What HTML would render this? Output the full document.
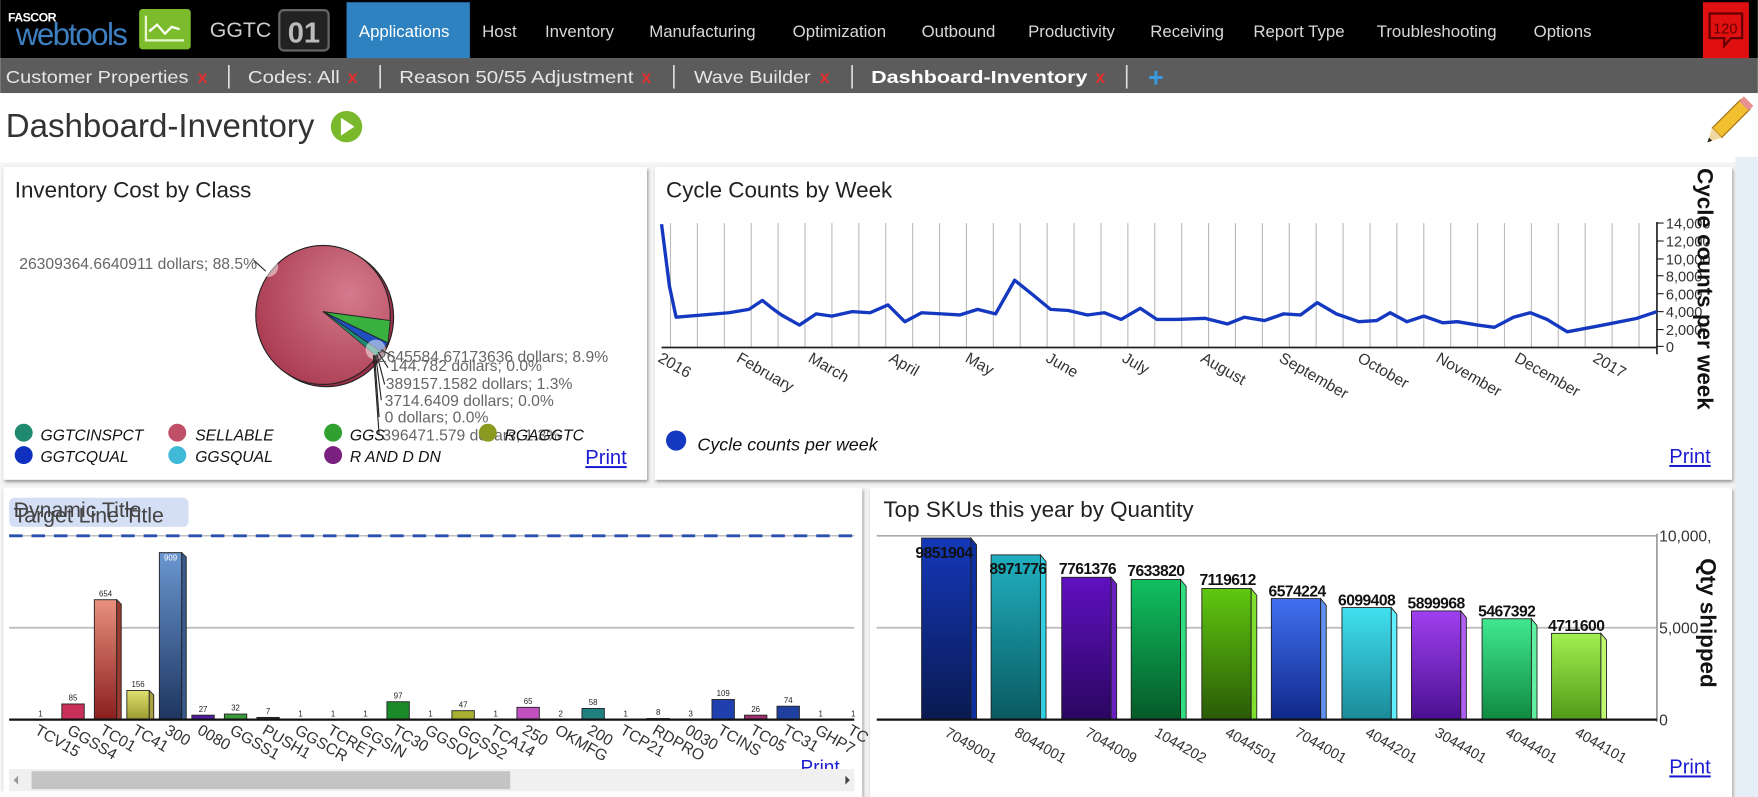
<!DOCTYPE html>
<html><head><meta charset="utf-8"><style>
html,body{margin:0;padding:0;width:1758px;height:797px;overflow:hidden;background:#fff}
svg{display:block}
text{font-family:"Liberation Sans",Arial,sans-serif}
</style></head><body>
<svg width="1758" height="797" viewBox="0 0 1568 711" xmlns="http://www.w3.org/2000/svg">
<defs>
<radialGradient id="pie" cx="0.7" cy="0.35" r="0.8"><stop offset="0" stop-color="#d47a8c"/><stop offset="1" stop-color="#a8384e"/></radialGradient>
<linearGradient id="gsal" x1="0" y1="0" x2="0" y2="1"><stop offset="0" stop-color="#e8907e"/><stop offset="1" stop-color="#8a1e1e"/></linearGradient>
<linearGradient id="gblu" x1="0" y1="0" x2="0" y2="1"><stop offset="0" stop-color="#6a96d0"/><stop offset="1" stop-color="#1e3660"/></linearGradient>
<linearGradient id="gyel" x1="0" y1="0" x2="0" y2="1"><stop offset="0" stop-color="#e0e070"/><stop offset="1" stop-color="#9a9a30"/></linearGradient>
<linearGradient id="b0" x1="0" y1="0" x2="0" y2="1"><stop offset="0" stop-color="#1438b8"/><stop offset="1" stop-color="#0a1a50"/></linearGradient>
<linearGradient id="b1" x1="0" y1="0" x2="0" y2="1"><stop offset="0" stop-color="#20b0c0"/><stop offset="1" stop-color="#0a5a60"/></linearGradient>
<linearGradient id="b2" x1="0" y1="0" x2="0" y2="1"><stop offset="0" stop-color="#6010c0"/><stop offset="1" stop-color="#2a0660"/></linearGradient>
<linearGradient id="b3" x1="0" y1="0" x2="0" y2="1"><stop offset="0" stop-color="#10c060"/><stop offset="1" stop-color="#065a28"/></linearGradient>
<linearGradient id="b4" x1="0" y1="0" x2="0" y2="1"><stop offset="0" stop-color="#60c810"/><stop offset="1" stop-color="#2a5a06"/></linearGradient>
<linearGradient id="b5" x1="0" y1="0" x2="0" y2="1"><stop offset="0" stop-color="#4070f0"/><stop offset="1" stop-color="#10288a"/></linearGradient>
<linearGradient id="b6" x1="0" y1="0" x2="0" y2="1"><stop offset="0" stop-color="#40e0f0"/><stop offset="1" stop-color="#1a8a98"/></linearGradient>
<linearGradient id="b7" x1="0" y1="0" x2="0" y2="1"><stop offset="0" stop-color="#a040f0"/><stop offset="1" stop-color="#4a1090"/></linearGradient>
<linearGradient id="b8" x1="0" y1="0" x2="0" y2="1"><stop offset="0" stop-color="#40e890"/><stop offset="1" stop-color="#108a40"/></linearGradient>
<linearGradient id="b9" x1="0" y1="0" x2="0" y2="1"><stop offset="0" stop-color="#a0f050"/><stop offset="1" stop-color="#509a18"/></linearGradient>
<filter id="sh" x="-5%" y="-5%" width="110%" height="110%"><feDropShadow dx="1" dy="2" stdDeviation="1.5" flood-color="#555" flood-opacity="0.6"/></filter>
</defs>

<rect x="0" y="83" width="1568" height="628" fill="#f4f4f4"/>
<rect x="0" y="83" width="1568" height="62" fill="#fff"/>
<rect x="1548" y="140" width="20" height="571" fill="#e6eef8"/>

<rect x="0" y="0" width="1568" height="52" fill="#000"/>
<text x="7" y="19" font-size="11" font-weight="bold" fill="#fff" letter-spacing="-0.5">FASCOR</text>
<text x="14" y="40" font-size="28" fill="#3d7fc0" letter-spacing="-1.5">webtools</text>
<rect x="124" y="8" width="46" height="36" rx="3" fill="#7cbc2c"/>
<path d="M130 14 L130 36 L164 36" stroke="#e8f6d0" stroke-width="2" fill="none"/>
<path d="M133 28 L140 22 L147 30 L153 24 L160 26" stroke="#fff" stroke-width="2" fill="none"/>
<text x="187" y="33" font-size="19" fill="#ccc">GGTC</text>
<rect x="249" y="9" width="44" height="36" rx="4" fill="#222" stroke="#666" stroke-width="2"/>
<text x="271" y="38" font-size="26" font-weight="bold" fill="#bbb" text-anchor="middle">01</text>
<rect x="309" y="2" width="110" height="50" fill="#2e82c0"/>
<g font-size="15" fill="#d8d8d8">
<text x="320" y="33" fill="#fff">Applications</text>
<text x="430" y="33">Host</text>
<text x="486" y="33">Inventory</text>
<text x="579" y="33">Manufacturing</text>
<text x="707" y="33">Optimization</text>
<text x="822" y="33">Outbound</text>
<text x="917" y="33">Productivity</text>
<text x="1026" y="33">Receiving</text>
<text x="1118" y="33">Report Type</text>
<text x="1228" y="33">Troubleshooting</text>
<text x="1368" y="33">Options</text>
</g>
<rect x="1519" y="2" width="41" height="50" fill="#e01010"/>
<path d="M1525 12 h29 v22 h-10 l-6 7 v-7 h-13 z" fill="none" stroke="#600" stroke-width="2"/>
<text x="1539" y="30" font-size="13" fill="#600" text-anchor="middle">120</text>

<rect x="0" y="52" width="1568" height="31" fill="#5c5c5c"/>
<g font-size="16" fill="#e6e6e6">
<text x="5" y="74" textLength="163" lengthAdjust="spacingAndGlyphs">Customer Properties</text><text x="176" y="74" fill="#e03030" font-weight="bold">x</text>
<text x="221" y="74" textLength="82" lengthAdjust="spacingAndGlyphs">Codes: All</text><text x="310" y="74" fill="#e03030" font-weight="bold">x</text>
<text x="356" y="74" textLength="209" lengthAdjust="spacingAndGlyphs">Reason 50/55 Adjustment</text><text x="572" y="74" fill="#e03030" font-weight="bold">x</text>
<text x="619" y="74" textLength="104" lengthAdjust="spacingAndGlyphs">Wave Builder</text><text x="731" y="74" fill="#e03030" font-weight="bold">x</text>
<text x="777" y="74" font-weight="bold" fill="#fff" textLength="193" lengthAdjust="spacingAndGlyphs">Dashboard-Inventory</text><text x="977" y="74" fill="#e03030" font-weight="bold">x</text>
</g>
<g stroke="#ddd" stroke-width="1.5"><line x1="204" y1="58" x2="204" y2="79"/><line x1="339" y1="58" x2="339" y2="79"/><line x1="601" y1="58" x2="601" y2="79"/><line x1="760" y1="58" x2="760" y2="79"/><line x1="1005" y1="58" x2="1005" y2="79"/></g>
<text x="1024" y="77" font-size="24" font-weight="bold" fill="#3a9ae0">+</text>

<text x="5" y="122" font-size="29.5" fill="#333">Dashboard-Inventory</text>
<circle cx="309" cy="113" r="14" fill="#7ab82c"/>
<path d="M304 105 L316 113 L304 121 Z" fill="#fff"/>
<g transform="rotate(45 1540 110)">
<rect x="1534" y="86" width="12" height="36" fill="#f0c030" stroke="#a07010" stroke-width="1"/>
<rect x="1534" y="82" width="12" height="6" fill="#e89090"/>
<path d="M1534 122 L1540 134 L1546 122 Z" fill="#f0d8a0"/>
<path d="M1538 130 L1540 134 L1542 130 Z" fill="#222"/>
</g>

<rect x="3" y="149" width="574" height="279" fill="#fff" filter="url(#sh)"/>
<rect x="584" y="149" width="961" height="279" fill="#fff" filter="url(#sh)"/>
<rect x="3" y="435" width="766" height="276" fill="#fff" filter="url(#sh)"/>
<rect x="776" y="435" width="769" height="276" fill="#fff" filter="url(#sh)"/>

<text x="13" y="176" font-size="20" fill="#222">Inventory Cost by Class</text>
<ellipse cx="291" cy="283" rx="60" ry="62" fill="#9a3048" stroke="#222"/>
<ellipse cx="288" cy="281" rx="60" ry="62" fill="url(#pie)" stroke="#222"/>
<path d="M288 278 L348 286 L346 306 Z" fill="#3ab040" stroke="#222" stroke-width="0.8"/>
<path d="M288 278 L346 306 L340 314 Z" fill="#2050c0" stroke="#222" stroke-width="0.8"/>
<path d="M288 278 L340 314 L336 318 Z" fill="#208a70" stroke="#222" stroke-width="0.6"/>
<circle cx="239" cy="238" r="9" fill="#fff" opacity="0.5"/>
<circle cx="335" cy="312" r="9" fill="#fff" opacity="0.5"/>
<g stroke="#222" stroke-width="1" fill="none">
<path d="M226 232 L237 242"/><path d="M340 312 L352 319"/><path d="M337 314 L346 328"/><path d="M336 316 L343 343"/><path d="M335 317 L340 357"/><path d="M334 317 L338 372"/><path d="M333 317 L338 387"/>
</g>
<g font-size="14" fill="#666">
<text x="17" y="240">26309364.6640911 dollars; 88.5%</text>
<text x="337" y="323">2645584.67173636 dollars; 8.9%</text>
<text x="348" y="331">144.782 dollars; 0.0%</text>
<text x="344" y="347">389157.1582 dollars; 1.3%</text>
<text x="343" y="362">3714.6409 dollars; 0.0%</text>
<text x="343" y="377">0 dollars; 0.0%</text>
<text x="341" y="393">396471.579 dollars; 1.3%</text>
</g>
<g font-size="14" font-style="italic" fill="#111">
<circle cx="21" cy="386" r="8" fill="#208a70"/><text x="36" y="393">GGTCINSPCT</text>
<circle cx="21" cy="406" r="8" fill="#1030c0"/><text x="36" y="412">GGTCQUAL</text>
<circle cx="158" cy="386" r="8" fill="#c05068"/><text x="174" y="393">SELLABLE</text>
<circle cx="158" cy="406" r="8" fill="#40b8d8"/><text x="174" y="412">GGSQUAL</text>
<circle cx="297" cy="386" r="8" fill="#30a030"/><text x="312" y="393">GGS</text>
<circle cx="297" cy="406" r="8" fill="#7a2080"/><text x="312" y="412">R AND D DN</text>
<circle cx="435" cy="386" r="8" fill="#8a9a20"/><text x="450" y="393">RGAGGTC</text>
</g>
<text x="522" y="414" font-size="18" fill="#1a1ad0" text-decoration="underline">Print</text>

<text x="594" y="176" font-size="20" fill="#222">Cycle Counts by Week</text>
<g stroke="#bbb" stroke-width="1">
<line x1="598" y1="199" x2="598" y2="310"/><line x1="622" y1="199" x2="622" y2="310"/><line x1="646" y1="199" x2="646" y2="310"/><line x1="670" y1="199" x2="670" y2="310"/><line x1="694" y1="199" x2="694" y2="310"/><line x1="718" y1="199" x2="718" y2="310"/><line x1="742" y1="199" x2="742" y2="310"/><line x1="766" y1="199" x2="766" y2="310"/><line x1="790" y1="199" x2="790" y2="310"/><line x1="814" y1="199" x2="814" y2="310"/><line x1="838" y1="199" x2="838" y2="310"/><line x1="862" y1="199" x2="862" y2="310"/><line x1="886" y1="199" x2="886" y2="310"/><line x1="910" y1="199" x2="910" y2="310"/><line x1="934" y1="199" x2="934" y2="310"/><line x1="958" y1="199" x2="958" y2="310"/><line x1="982" y1="199" x2="982" y2="310"/><line x1="1006" y1="199" x2="1006" y2="310"/><line x1="1030" y1="199" x2="1030" y2="310"/><line x1="1054" y1="199" x2="1054" y2="310"/><line x1="1078" y1="199" x2="1078" y2="310"/><line x1="1102" y1="199" x2="1102" y2="310"/><line x1="1126" y1="199" x2="1126" y2="310"/><line x1="1150" y1="199" x2="1150" y2="310"/><line x1="1174" y1="199" x2="1174" y2="310"/><line x1="1198" y1="199" x2="1198" y2="310"/><line x1="1222" y1="199" x2="1222" y2="310"/><line x1="1246" y1="199" x2="1246" y2="310"/><line x1="1270" y1="199" x2="1270" y2="310"/><line x1="1294" y1="199" x2="1294" y2="310"/><line x1="1318" y1="199" x2="1318" y2="310"/><line x1="1342" y1="199" x2="1342" y2="310"/><line x1="1366" y1="199" x2="1366" y2="310"/><line x1="1390" y1="199" x2="1390" y2="310"/><line x1="1414" y1="199" x2="1414" y2="310"/><line x1="1438" y1="199" x2="1438" y2="310"/><line x1="1462" y1="199" x2="1462" y2="310"/>
</g>
<line x1="590" y1="310" x2="1478" y2="310" stroke="#222" stroke-width="1.5"/>
<line x1="1478" y1="198" x2="1478" y2="316" stroke="#222" stroke-width="1.5"/>
<g stroke="#222"><line x1="1478" y1="199" x2="1484" y2="199"/><line x1="1478" y1="215" x2="1484" y2="215"/><line x1="1478" y1="231" x2="1484" y2="231"/><line x1="1478" y1="246" x2="1484" y2="246"/><line x1="1478" y1="262" x2="1484" y2="262"/><line x1="1478" y1="278" x2="1484" y2="278"/><line x1="1478" y1="294" x2="1484" y2="294"/><line x1="1478" y1="309" x2="1484" y2="309"/></g>
<g font-size="13" fill="#333"><text x="1486" y="204">14,000</text><text x="1486" y="220">12,000</text><text x="1486" y="236">10,000</text><text x="1486" y="251">8,000</text><text x="1486" y="267">6,000</text><text x="1486" y="283">4,000</text><text x="1486" y="299">2,000</text><text x="1486" y="314">0</text></g>
<text transform="translate(1514 150) rotate(90)" font-size="20" font-weight="bold" fill="#111">Cycle counts per week</text>
<polyline fill="none" stroke="#1438c0" stroke-width="3" stroke-linejoin="round" points="590,200 597,255 603,283 650,279 668,276 680,268 690,276 697,281 713,290 728,280 742,282 760,278 776,279 792,272 807,287 822,279 840,280 856,281 872,276 888,280 905,250 920,262 937,276 953,277 970,281 985,279 1000,285 1017,275 1032,285 1050,285 1075,284 1095,289 1110,283 1128,286 1145,280 1160,281 1175,270 1192,280 1212,287 1228,286 1240,279 1255,287 1270,282 1287,288 1300,287 1318,290 1333,292 1350,283 1365,279 1380,285 1398,296 1430,290 1460,284 1478,278"/>
<g font-size="14" fill="#333">
<text transform="translate(586 322) rotate(30)">2016</text>
<text transform="translate(656 322) rotate(30)">February</text>
<text transform="translate(720 322) rotate(30)">March</text>
<text transform="translate(792 322) rotate(30)">April</text>
<text transform="translate(860 322) rotate(30)">May</text>
<text transform="translate(932 322) rotate(30)">June</text>
<text transform="translate(1000 322) rotate(30)">July</text>
<text transform="translate(1070 322) rotate(30)">August</text>
<text transform="translate(1140 322) rotate(30)">September</text>
<text transform="translate(1210 322) rotate(30)">October</text>
<text transform="translate(1280 322) rotate(30)">November</text>
<text transform="translate(1350 322) rotate(30)">December</text>
<text transform="translate(1420 322) rotate(30)">2017</text>
</g>
<circle cx="603" cy="393" r="9" fill="#1438c0"/>
<text x="622" y="402" font-size="16" font-style="italic" fill="#111">Cycle counts per week</text>
<text x="1489" y="413" font-size="18" fill="#1a1ad0" text-decoration="underline">Print</text>

<rect x="8" y="444" width="160" height="26" rx="5" fill="#d4def4"/>
<text x="12" y="461" font-size="19" fill="#444">Dynamic Title</text>
<text x="12" y="466" font-size="19" fill="#444">Target Line Title</text>
<line x1="8" y1="478" x2="762" y2="478" stroke="#aaa" stroke-width="1"/>
<line x1="8" y1="478" x2="762" y2="478" stroke="#2a50b0" stroke-width="2.5" stroke-dasharray="12,8"/>
<line x1="8" y1="560" x2="762" y2="560" stroke="#bbb" stroke-width="1.5"/>
<g stroke="#222" stroke-width="0.8">
<rect x="55" y="628" width="20" height="14" fill="#c8305a"/>
<rect x="84" y="535" width="20" height="107" fill="url(#gsal)"/><path d="M104 535 l4 4 v103 h-4z" fill="#9a3a30"/>
<rect x="113" y="616" width="20" height="26" fill="url(#gyel)"/><path d="M133 616 l4 4 v22 h-4z" fill="#aaa040"/>
<rect x="142" y="493" width="20" height="149" fill="url(#gblu)"/><path d="M162 493 l4 4 v145 h-4z" fill="#3a5a90"/>
<rect x="171" y="638" width="20" height="4" fill="#5020a0"/>
<rect x="200" y="637" width="20" height="5" fill="#3a9a3a"/>
<rect x="229" y="640" width="20" height="2" fill="#333"/>
<rect x="345" y="626" width="20" height="16" fill="#1a8a2a"/>
<rect x="403" y="634" width="20" height="8" fill="#a8b030"/>
<rect x="461" y="631" width="20" height="11" fill="#c050c0"/>
<rect x="519" y="632" width="20" height="10" fill="#208080"/>
<rect x="577" y="641" width="20" height="1" fill="#333"/>
<rect x="635" y="624" width="20" height="18" fill="#2040b0"/>
<rect x="664" y="638" width="20" height="4" fill="#a03070"/>
<rect x="693" y="630" width="20" height="12" fill="#2040a0"/>
</g>
<line x1="8" y1="642" x2="762" y2="642" stroke="#111" stroke-width="2"/>
<g font-size="7" fill="#222" text-anchor="middle">
<text x="36" y="639">1</text><text x="65" y="625">85</text><text x="94" y="532">654</text><text x="123" y="613">156</text><text x="152" y="500" fill="#fff">909</text><text x="181" y="635">27</text><text x="210" y="634">32</text><text x="239" y="637">7</text><text x="268" y="639">1</text><text x="297" y="639">1</text><text x="326" y="639">1</text><text x="355" y="623">97</text><text x="384" y="639">1</text><text x="413" y="631">47</text><text x="442" y="639">1</text><text x="471" y="628">65</text><text x="500" y="639">2</text><text x="529" y="629">58</text><text x="558" y="639">1</text><text x="587" y="638">8</text><text x="616" y="639">3</text><text x="645" y="621">109</text><text x="674" y="635">26</text><text x="703" y="627">74</text><text x="732" y="639">1</text><text x="761" y="639">1</text>
</g>
<g font-size="14" fill="#333">
<text transform="translate(30 654) rotate(30)">TCV15</text><text transform="translate(59 654) rotate(30)">GGSS4</text><text transform="translate(88 654) rotate(30)">TC01</text><text transform="translate(117 654) rotate(30)">TC41</text><text transform="translate(146 654) rotate(30)">300</text><text transform="translate(175 654) rotate(30)">0080</text><text transform="translate(204 654) rotate(30)">GGSS1</text><text transform="translate(233 654) rotate(30)">PUSH1</text><text transform="translate(262 654) rotate(30)">GGSCR</text><text transform="translate(291 654) rotate(30)">TCRET</text><text transform="translate(320 654) rotate(30)">GGSIN</text><text transform="translate(349 654) rotate(30)">TC30</text><text transform="translate(378 654) rotate(30)">GGSOV</text><text transform="translate(407 654) rotate(30)">GGSS2</text><text transform="translate(436 654) rotate(30)">TCA14</text><text transform="translate(465 654) rotate(30)">250</text><text transform="translate(494 654) rotate(30)">OKMFG</text><text transform="translate(523 654) rotate(30)">200</text><text transform="translate(552 654) rotate(30)">TCP21</text><text transform="translate(581 654) rotate(30)">RDPRO</text><text transform="translate(610 654) rotate(30)">0030</text><text transform="translate(639 654) rotate(30)">TCINS</text><text transform="translate(668 654) rotate(30)">TC05</text><text transform="translate(697 654) rotate(30)">TC31</text><text transform="translate(726 654) rotate(30)">GHP7</text><text transform="translate(755 654) rotate(30)">TC</text>
</g>
<text x="714" y="690" font-size="17" fill="#1a1ad0">Print</text>
<rect x="8" y="686" width="754" height="20" fill="#f0f0f0"/>
<rect x="28" y="688" width="427" height="16" fill="#c4c4c4"/>
<path d="M16 692 l-4 4 l4 4z" fill="#999"/><path d="M754 692 l4 4 l-4 4z" fill="#444"/>
<rect x="0" y="706" width="769" height="5" fill="#fff"/>

<text x="788" y="461" font-size="20" fill="#222">Top SKUs this year by Quantity</text>
<line x1="782" y1="478" x2="1478" y2="478" stroke="#aaa" stroke-width="1.5"/>
<line x1="782" y1="560" x2="1478" y2="560" stroke="#bbb" stroke-width="1.5"/>
<line x1="1478" y1="476" x2="1478" y2="644" stroke="#999" stroke-width="1.5"/>
<g stroke="#222" stroke-width="0.8">
<rect x="822" y="480" width="44" height="162" fill="url(#b0)"/><path d="M866 480 l5 6 v156 h-5z" fill="#1030a0"/>
<rect x="884" y="495" width="44" height="147" fill="url(#b1)"/><path d="M928 495 l5 6 v141 h-5z" fill="#30d0e0"/>
<rect x="947" y="515" width="44" height="127" fill="url(#b2)"/><path d="M991 515 l5 6 v121 h-5z" fill="#6a20c0"/>
<rect x="1009" y="517" width="44" height="125" fill="url(#b3)"/><path d="M1053 517 l5 6 v119 h-5z" fill="#30e080"/>
<rect x="1072" y="525" width="44" height="117" fill="url(#b4)"/><path d="M1116 525 l5 6 v111 h-5z" fill="#80e030"/>
<rect x="1134" y="534" width="44" height="108" fill="url(#b5)"/><path d="M1178 534 l5 6 v102 h-5z" fill="#6090f0"/>
<rect x="1197" y="542" width="44" height="100" fill="url(#b6)"/><path d="M1241 542 l5 6 v94 h-5z" fill="#60f0ff"/>
<rect x="1259" y="545" width="44" height="97" fill="url(#b7)"/><path d="M1303 545 l5 6 v91 h-5z" fill="#b060f0"/>
<rect x="1322" y="552" width="44" height="90" fill="url(#b8)"/><path d="M1366 552 l5 6 v84 h-5z" fill="#60f0a0"/>
<rect x="1384" y="565" width="44" height="77" fill="url(#b9)"/><path d="M1428 565 l5 6 v71 h-5z" fill="#c0f870"/>
</g>
<line x1="782" y1="642" x2="1478" y2="642" stroke="#111" stroke-width="2"/>
<g font-size="14" font-weight="bold" fill="#111" text-anchor="middle" letter-spacing="-0.5">
<text x="842" y="498">9851904</text><text x="908" y="512">8971776</text><text x="970" y="512">7761376</text><text x="1031" y="514">7633820</text><text x="1095" y="522">7119612</text><text x="1157" y="532">6574224</text><text x="1219" y="540">6099408</text><text x="1281" y="543">5899968</text><text x="1344" y="550">5467392</text><text x="1406" y="563">4711600</text>
</g>
<g font-size="14" fill="#333"><text x="1480" y="483">10,000,</text><text x="1480" y="565">5,000</text><text x="1480" y="647">0</text></g>
<text transform="translate(1517 498) rotate(90)" font-size="20" font-weight="bold" fill="#111">Qty shipped</text>
<g font-size="13" fill="#333">
<text transform="translate(842 656) rotate(30)">7049001</text><text transform="translate(904 656) rotate(30)">8044001</text><text transform="translate(967 656) rotate(30)">7044009</text><text transform="translate(1029 656) rotate(30)">1044202</text><text transform="translate(1092 656) rotate(30)">4044501</text><text transform="translate(1154 656) rotate(30)">7044001</text><text transform="translate(1217 656) rotate(30)">4044201</text><text transform="translate(1279 656) rotate(30)">3044401</text><text transform="translate(1342 656) rotate(30)">4044401</text><text transform="translate(1404 656) rotate(30)">4044101</text>
</g>
<text x="1489" y="690" font-size="18" fill="#1a1ad0" text-decoration="underline">Print</text>
</svg>
</body></html>
